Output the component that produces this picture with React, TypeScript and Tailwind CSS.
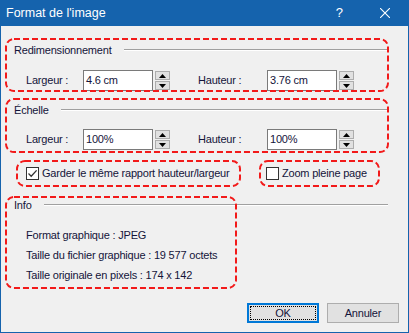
import { FC, ReactNode } from 'react';

const FONT = 'font-["Liberation_Sans",Arial,sans-serif]';

type DashBoxProps = { className?: string; children?: ReactNode };

const DashOutline: FC = () => (
  <svg className="pointer-events-none absolute inset-[1px] h-[calc(100%-2px)] w-[calc(100%-2px)] overflow-visible">
    <rect
      x="0"
      y="0"
      width="100%"
      height="100%"
      rx="8"
      ry="8"
      fill="none"
      stroke="#f21a1a"
      strokeWidth="2"
      strokeDasharray="6 3"
    />
  </svg>
);

// red dashed annotation drawn over the dialog controls
const DashBox: FC<DashBoxProps> = ({ className = '', children }) => (
  <div className={`relative ${className}`}>
    {children}
    <DashOutline />
  </div>
);

const GroupHeading: FC<{ title: string; className?: string }> = ({ title, className = '' }) => (
  <div className={`flex h-[14px] items-center pl-[9px] ${className}`}>
    <span className="leading-[14px]">{title}</span>
    <div className="ml-[12px] mr-[1px] h-[2px] flex-1 border-t border-t-[#a0a0a0] border-b border-b-white" />
  </div>
);

const Spinner: FC = () => (
  <div className="ml-[2px] flex h-[21px] w-[15px] flex-col justify-between py-[1px]">
    <div className="flex h-[9px] items-center justify-center border border-[#adadad] bg-[#e1e1e1]">
      <svg width="7" height="4" viewBox="0 0 7 4">
        <path d="M3.5 0 L7 4 L0 4 Z" fill="#000" />
      </svg>
    </div>
    <div className="flex h-[9px] items-center justify-center border border-[#adadad] bg-[#e1e1e1]">
      <svg width="7" height="4" viewBox="0 0 7 4">
        <path d="M0 0 L7 0 L3.5 4 Z" fill="#000" />
      </svg>
    </div>
  </div>
);

const Field: FC<{ value: string }> = ({ value }) => (
  <div className="flex">
    <div className="flex h-[21px] w-[70px] items-center border border-[#7a7a7a] bg-white pl-[2px]">
      {value}
    </div>
    <Spinner />
  </div>
);

const SizeRow: FC<{ width: string; height: string; className?: string }> = ({ width, height, className = '' }) => (
  <div className={`flex h-[21px] items-center pl-[21px] ${className}`}>
    <span className="w-[57px]">Largeur :</span>
    <Field value={width} />
    <span className="ml-[28px] w-[69px]">Hauteur :</span>
    <Field value={height} />
  </div>
);

const Checkbox: FC<{ checked?: boolean }> = ({ checked }) => (
  <div className="flex h-[13px] w-[13px] shrink-0 items-center justify-center border border-[#333] bg-white">
    {checked && (
      <svg width="11" height="11" viewBox="0 0 11 11">
        <path d="M1.5 5.5 L4.2 8.2 L9.6 2.4" fill="none" stroke="#333" strokeWidth="1.3" />
      </svg>
    )}
  </div>
);

export default function App() {
  return (
    <div className={`${FONT} flex h-[333px] w-[409px] flex-col overflow-hidden border-x border-b border-[#1563ad] bg-[#f0f0f0] text-[11px] tracking-[-0.2px] text-[#14143a]`}>
      <div className="flex h-[26px] shrink-0 items-center bg-[#1563ad] pl-[5px] text-[12.5px] tracking-normal text-white">
        <span>Format de l'image</span>
        <span className="ml-auto mr-[37px] text-[13px]">?</span>
        <svg className="mr-[18px]" width="10" height="10" viewBox="0 0 10 10">
          <path d="M0 0 L10 10 M10 0 L0 10" stroke="#fff" strokeWidth="1.1" />
        </svg>
      </div>

      <div className="flex flex-col px-[4px] pt-[12px]">
        <DashBox className="h-[54px] w-[384px]">
          <GroupHeading title="Redimensionnement" className="mt-[5px]" />
          <SizeRow width="4.6 cm" height="3.76 cm" className="mt-[13px]" />
        </DashBox>

        <DashBox className="mt-[6px] h-[55px] w-[384px]">
          <GroupHeading title="Échelle" className="mt-[5px]" />
          <SizeRow width="100%" height="100%" className="mt-[12px]" />
        </DashBox>

        <div className="mt-[7px] flex h-[27px]">
          <DashBox className="ml-[11px] flex h-[27px] w-[225px] items-center pl-[10px]">
            <Checkbox checked />
            <span className="ml-[3px] whitespace-nowrap">Garder le même rapport hauteur/largeur</span>
          </DashBox>
          <DashBox className="ml-[18px] flex h-[27px] w-[121px] items-center pl-[7px]">
            <Checkbox />
            <span className="ml-[3px] whitespace-nowrap">Zoom pleine page</span>
          </DashBox>
        </div>

        <div className="relative mt-[9px] h-[93px] w-[384px]">
          <GroupHeading title="Info" className="mt-[2px]" />
          <div className="mt-[13px] flex flex-col pl-[21px]">
            <div className="flex h-[20px] items-center">Format graphique : JPEG</div>
            <div className="flex h-[20px] items-center">Taille du fichier graphique : 19 577 octets</div>
            <div className="flex h-[20px] items-center">Taille originale en pixels : 174 x 142</div>
          </div>
          <div className="pointer-events-none absolute left-0 top-0 h-[93px] w-[232px]">
            <DashOutline />
          </div>
        </div>

        <div className="mt-[14px] flex justify-end gap-[8px] pr-[5px]">
          <button className="flex h-[20px] w-[72px] items-center justify-center border-2 border-[#0078d7] bg-[#e1e1e1] p-[1px]">
            <span className="flex h-full w-full items-center justify-center border border-dotted border-black">OK</span>
          </button>
          <button className="flex h-[20px] w-[72px] items-center justify-center border border-[#adadad] bg-[#e1e1e1]">
            Annuler
          </button>
        </div>
      </div>
    </div>
  );
}
